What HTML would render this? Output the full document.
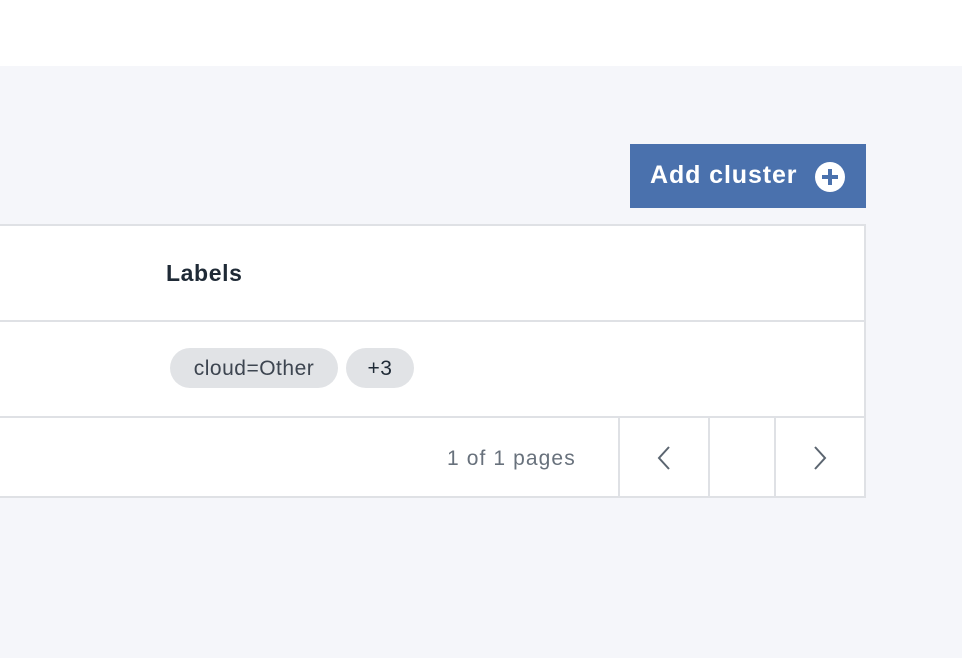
<!DOCTYPE html>
<html><head><style>
body{margin:0;width:962px;height:658px;background:#f5f6fa;font-family:"Liberation Sans",sans-serif;position:relative;overflow:hidden}
.top{position:absolute;left:0;top:0;width:962px;height:66px;background:#fff}
.btn{position:absolute;left:630px;top:144px;width:236px;height:64px;background:#4a71ad;color:#fff;font-size:25px;font-weight:bold;letter-spacing:0.9px}
.btn span{position:absolute;left:20px;top:17px}
.btn svg{position:absolute;left:184px;top:17px}
.box{position:absolute;background:#fff;border:2px solid #dfe1e5;box-sizing:border-box}
.txt{position:absolute;white-space:nowrap}
.tag{position:absolute;top:348px;height:40px;background:#e1e3e6;border-radius:20px;font-size:21px;color:#3d4550;line-height:42px;text-align:center;letter-spacing:0.5px}
</style></head><body>
<div class="top"></div>
<div class="btn"><span>Add cluster</span>
<svg width="32" height="32" viewBox="0 0 32 32"><circle cx="16" cy="16" r="15" fill="#fff"/><path d="M16 8v16M8 16h16" stroke="#4a71ad" stroke-width="4"/></svg></div>
<div class="box" style="left:-2px;top:224px;width:868px;height:98px"></div>
<div class="box" style="left:-2px;top:320px;width:868px;height:98px"></div>
<div class="box" style="left:-2px;top:416px;width:868px;height:82px"></div>
<div class="box" style="left:618px;top:416px;width:92px;height:82px"></div>
<div class="box" style="left:708px;top:416px;width:68px;height:82px"></div>
<div class="txt" style="left:166px;top:260px;font-size:23px;font-weight:bold;color:#1f2a36;letter-spacing:0.6px">Labels</div>
<div class="tag" style="left:170px;width:168px">cloud=Other</div>
<div class="tag" style="left:346px;width:68px;color:#1f2a36">+3</div>
<div class="txt" style="left:447px;top:447px;font-size:21px;color:#68717c;letter-spacing:1.1px">1 of 1 pages</div>
<svg style="position:absolute;left:655px;top:445px" width="20" height="26"><path d="M14 2L4 13l10 11" fill="none" stroke="#5b6570" stroke-width="2"/></svg>
<svg style="position:absolute;left:810px;top:445px" width="20" height="26"><path d="M5 2l10 11L5 24" fill="none" stroke="#5b6570" stroke-width="2"/></svg>
</body></html>
